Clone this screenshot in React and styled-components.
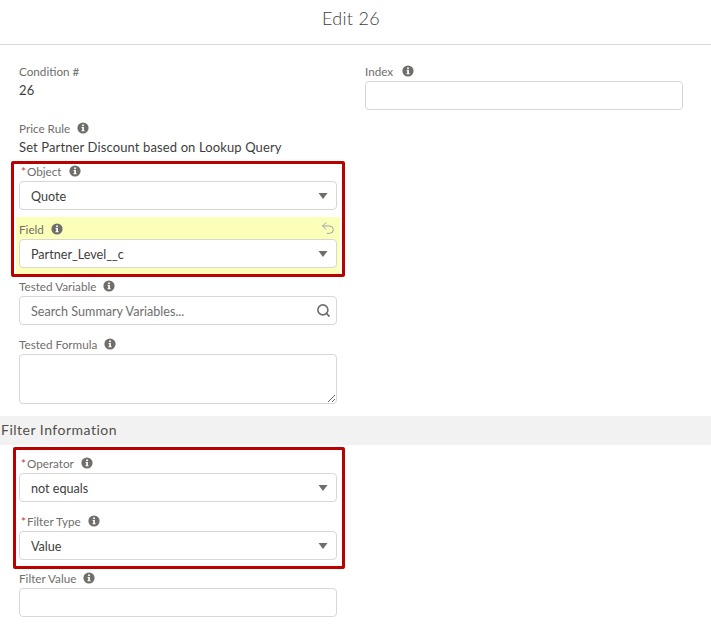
import React from 'react'
import styled, { createGlobalStyle } from 'styled-components'
import { Search, Undo2 } from 'lucide-react'

const GlobalStyle = createGlobalStyle`
	html, body {
		margin: 0;
		padding: 0;
		background: #fff;
		font-family: "Lato", "Liberation Sans", sans-serif;
		color: #16325c;
	}
	* {
		box-sizing: border-box;
	}
`

const Page = styled.div`
	width: 711px;
	height: 624px;
	overflow: hidden;
`

const Header = styled.header`
	height: 45px;
	border-bottom: 1px solid #dddbda;
	display: flex;
	align-items: center;
	justify-content: center;
	padding-bottom: 9px;
	padding-right: 9px;
	font-size: 18px;
	font-weight: 300;
	letter-spacing: 0.3px;
	color: #3e3e3c;
`

const Columns = styled.div`
	display: flex;
	gap: 28px;
	padding: 16px 28px 0 19px;
`

const Column = styled.div`
	width: 318px;
`

const LabelRow = styled.div`
	display: flex;
	align-items: center;
	height: ${props => props.$height || 20}px;
	padding-bottom: 1px;
	font-size: 11.7px;
	color: #706e6b;
`

const Required = styled.span`
	color: #c23934;
	margin: 0 1px 0 2px;
`

const InfoWrap = styled.span`
	display: inline-flex;
	margin-left: ${props => props.$gap || 7}px;
`

const ReadValue = styled.div`
	height: 19px;
	line-height: 19px;
	font-size: 13px;
	letter-spacing: 0.12px;
	color: #3e3e3c;
	margin-bottom: ${props => props.$after}px;
`

const SelectBox = styled.div`
	height: 29px;
	display: flex;
	align-items: center;
	justify-content: space-between;
	padding: 1px 8px 0 11px;
	background: #fff;
	border: 1px solid #d9d7d5;
	border-radius: 4px;
	font-size: 12.6px;
	color: #3e3e3c;
`

const TextInput = styled.input`
	display: block;
	width: 100%;
	height: 29px;
	padding: 1px 11px 0;
	background: #fff;
	border: 1px solid #d9d7d5;
	border-radius: 4px;
	font: inherit;
	font-size: 12.6px;
	outline: none;
	&::placeholder {
		color: #706e6b;
		opacity: 1;
	}
`

const SearchWrap = styled.div`
	position: relative;
	svg {
		position: absolute;
		right: 6px;
		top: 7px;
	}
`

const TextArea = styled.textarea`
	display: block;
	width: 100%;
	height: 50px;
	padding: 6px 11px;
	background: #fff;
	border: 1px solid #d9d7d5;
	border-radius: 4px;
	font: inherit;
	font-size: 12.6px;
	outline: none;
`

const Field = styled.div`
	margin-bottom: ${props => props.$after === undefined ? 9 : props.$after}px;
`

const ChangedField = styled.div`
	margin: 0 -3px 2px;
	padding: 2px 3px 7px;
	background: #fcffb8;
`

const UndoIcon = styled(Undo2)`
	margin-left: auto;
	margin-right: 1px;
	margin-top: -2px;
	color: #9aa3ab;
`

const Annotated = styled.div`
	position: relative;
`

const RedBox = styled.div`
	position: absolute;
	top: ${props => props.$top}px;
	bottom: ${props => props.$bottom}px;
	left: ${props => props.$left}px;
	right: -8px;
	border: 3px solid #bb0000;
	border-radius: 2px;
	pointer-events: none;
`

const SectionBar = styled.div`
	height: 29px;
	margin: 0 0 8px;
	padding: 0 0 2px 1px;
	display: flex;
	align-items: center;
	background: #f3f2f2;
	font-size: 14px;
	letter-spacing: 0.5px;
	color: #514f4d;
`

const Lower = styled.div`
	width: 318px;
	margin-left: 19px;
`

const InfoIcon = () => (
	<svg width="12" height="12" viewBox="0 0 12 12">
		<circle cx="6" cy="6" r="5.6" fill="#706e6b" />
		<rect x="5.1" y="2.5" width="1.8" height="1.6" fill="#fff" />
		<path d="M4.6 5h2.3v3.2h.7v1H4.5v-1h.7V6h-.6z" fill="#fff" />
	</svg>
)

const Caret = () => (
	<svg width="10" height="6" viewBox="0 0 10 6">
		<path d="M0.5 0h9L5 6z" fill="#706e6b" />
	</svg>
)

const Label = ({ text, required, gap, height, children }) => (
	<LabelRow $height={height}>
		{required && <Required>*</Required>}
		{text}
		{gap !== 0 && <InfoWrap $gap={gap}><InfoIcon /></InfoWrap>}
		{children}
	</LabelRow>
)

const Select = ({ value }) => (
	<SelectBox>
		{value}
		<Caret />
	</SelectBox>
)

class App extends React.Component {
	render() {
		return (
			<Page>
				<GlobalStyle />
				<Header>Edit 26</Header>
				<Columns>
					<Column>
						<Label text="Condition #" gap={0} />
						<ReadValue $after={18}>26</ReadValue>
						<Label text="Price Rule" />
						<ReadValue $after={4}>Set Partner Discount based on Lookup Query</ReadValue>
						<Annotated>
							<Field $after={7}>
								<Label text="Object" required />
								<Select value="Quote" />
							</Field>
							<ChangedField>
								<Label text="Field">
									<UndoIcon size={16} strokeWidth={1.5} />
								</Label>
								<Select value="Partner_Level__c" />
							</ChangedField>
							<RedBox $top={0} $bottom={-2} $left={-8} />
						</Annotated>
						<Field>
							<Label text="Tested Variable" height={19} />
							<SearchWrap>
								<TextInput placeholder="Search Summary Variables..." />
								<Search size={15} color="#706e6b" strokeWidth={2.6} />
							</SearchWrap>
						</Field>
						<Field $after={12}>
							<Label text="Tested Formula" />
							<TextArea />
						</Field>
					</Column>
					<Column>
						<Label text="Index" gap={9} />
						<TextInput />
					</Column>
				</Columns>
				<SectionBar>Filter Information</SectionBar>
				<Lower>
					<Annotated>
						<Field>
							<Label text="Operator" required />
							<Select value="not equals" />
						</Field>
						<Field $after={8}>
							<Label text="Filter Type" required />
							<Select value="Value" />
						</Field>
						<RedBox $top={-6} $bottom={-9} $left={-6} />
					</Annotated>
					<Field>
						<Label text="Filter Value" />
						<TextInput />
					</Field>
				</Lower>
			</Page>
		)
	}
}

export default App
